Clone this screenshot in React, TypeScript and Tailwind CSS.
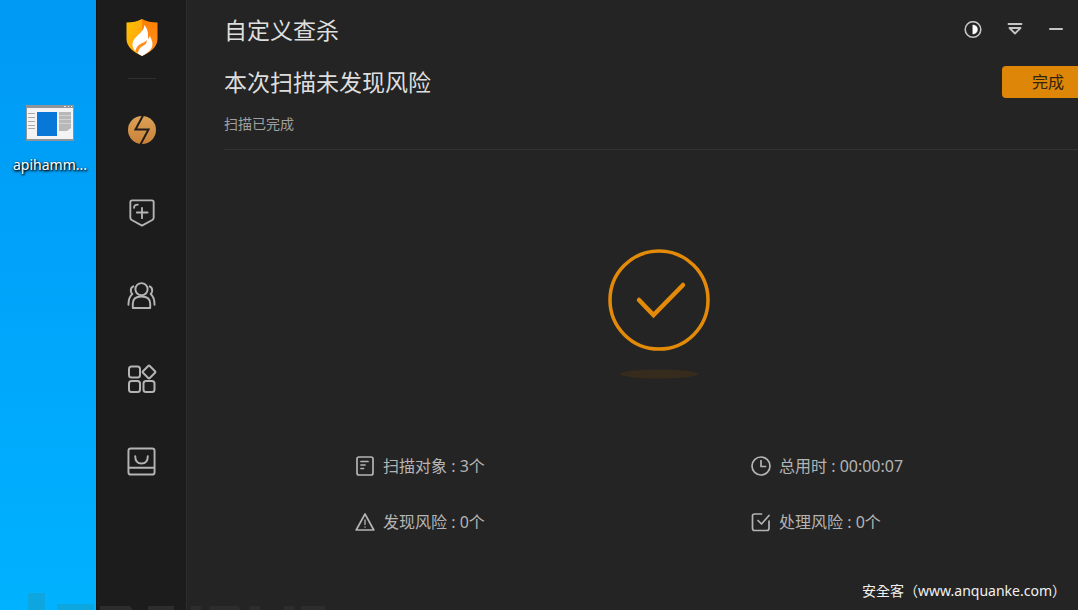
import React, { useState } from 'react';

const strokeProps = {
  fill: 'none',
  stroke: 'currentColor',
  strokeLinecap: 'round' as const,
  strokeLinejoin: 'round' as const,
  'aria-hidden': true,
};

const ShieldLogo: React.FC = () => (
  <svg width="32" height="37" viewBox="0 0 32 37" aria-hidden="true">
    <defs>
      <linearGradient id="shieldLeft" x1="0" y1="0" x2="1" y2="1">
        <stop offset="0" stopColor="#ffc400" />
        <stop offset="1" stopColor="#ff9a14" />
      </linearGradient>
      <linearGradient id="shieldRight" x1="0" y1="0" x2="0" y2="1">
        <stop offset="0" stopColor="#ff8000" />
        <stop offset="1" stopColor="#ff9226" />
      </linearGradient>
    </defs>
    <path d="M16 0 C12 2.5 6 3.4 0.5 3.4 V20 C0.5 28 8 33.5 16 37 Z" fill="url(#shieldLeft)" />
    <path d="M16 0 C20 2.5 26 3.4 31.5 3.4 V20 C31.5 28 24 33.5 16 37 Z" fill="url(#shieldRight)" />
    <path
      d="M18 6 C18.500 10 16 12.500 12 16 C7 20.500 5.500 24.500 7 28.500 C8.500 32.500 12 34.500 16 37 C21 34.500 25.500 31 26.300 26.500 C27 22 25 20 23.800 16.500 C23.500 18.300 23 19.300 22 20 C22.500 14 21.500 9 18 6 Z"
      fill="#fff"
    />
    <path
      d="M9.500 32.500 C10 27.500 13.500 25 17 23.800 C19 23 20.200 22 20.500 20.800 C21.300 23.500 20 25.300 17.500 26.500 C14 28.200 12.500 30.500 12 34 Z"
      fill="#ff8f1c"
    />
  </svg>
);

const ScanIcon = () => (
  <svg width="30" height="30" viewBox="0 0 30 30" aria-hidden="true">
    <defs>
      <linearGradient id="scanFill" x1="0" y1="0" x2="0" y2="1">
        <stop offset="0" stopColor="#dca257" />
        <stop offset="1" stopColor="#c98239" />
      </linearGradient>
    </defs>
    <circle cx="15" cy="15" r="14" fill="url(#scanFill)" />
    <path d="M16 0.5 L8.5 14.5 H21.5 L13.5 29.5" fill="none" stroke="#221d18" strokeWidth="2" />
  </svg>
);

const ProtectIcon = () => (
  <svg {...strokeProps} width="28" height="28" viewBox="0 0 30 30" strokeWidth="2">
    <path d="M4.500 1.500 H25.500 Q27.500 1.500 27.500 3.500 V20 Q27.500 21.500 26 22.500 L15 28.500 L4 22.500 Q2.500 21.500 2.500 20 V3.500 Q2.500 1.500 4.500 1.500 Z" />
    <path d="M15 9.500 V20.500 M9.500 14.500 H21 M6.500 9.500 Q6.500 6 10.500 6" />
  </svg>
);

const UsersIcon = () => (
  <svg {...strokeProps} width="29" height="29" viewBox="0 0 30 30" strokeWidth="2">
    <circle cx="15" cy="8.500" r="6.300" />
    <path d="M6 28 V23.500 Q6 16 15 16 Q24 16 24 23.500 V28 Z" />
    <path d="M6.500 5.500 Q3.500 7 4 10.500 Q4.500 12.500 5.500 13.500 Q1.500 17 1.500 24.500 M23.500 5.500 Q26.500 7 26 10.500 Q25.500 12.500 24.500 13.500 Q28.500 17 28.500 24.500" />
  </svg>
);

const AppsIcon = () => (
  <svg {...strokeProps} width="30" height="30" viewBox="0 0 30 30" strokeWidth="2">
    <rect x="2" y="2.500" width="11" height="11" rx="2.500" />
    <rect x="2" y="17" width="11" height="11" rx="2.500" />
    <rect x="16.500" y="17" width="11" height="11" rx="2.500" />
    <path d="M21.200 2 Q22 1.200 22.800 2 L28 7.200 Q28.700 8 28 8.800 L22.800 14 Q22 14.800 21.200 14 L16 8.800 Q15.300 8 16 7.200 Z" />
  </svg>
);

const StoreIcon = () => (
  <svg {...strokeProps} width="29" height="29" viewBox="0 0 30 30" strokeWidth="2">
    <rect x="1.500" y="1.500" width="27" height="27" rx="2.500" />
    <path d="M2 21.500 H28 M8.500 9.500 Q8.500 17 15 17 Q21.500 17 21.500 9.500" />
  </svg>
);

const navItems = [
  { id: 'scan', label: '病毒查杀', Icon: ScanIcon },
  { id: 'protect', label: '防护中心', Icon: ProtectIcon },
  { id: 'access', label: '访问控制', Icon: UsersIcon },
  { id: 'tools', label: '安全工具', Icon: AppsIcon },
  { id: 'store', label: '应用商店', Icon: StoreIcon },
];

const stats = [
  {
    label: '扫描对象',
    value: '3个',
    icon: (
      <>
        <rect x="2" y="1" width="16" height="18" rx="2" />
        <path d="M6 5.500 H13 M6 9 H10 M6 12.500 H8.500" />
      </>
    ),
  },
  {
    label: '总用时',
    value: '00:00:07',
    icon: (
      <>
        <circle cx="10" cy="10" r="9" />
        <path d="M10 4.500 V10.500 H14.500" />
      </>
    ),
  },
  {
    label: '发现风险',
    value: '0个',
    icon: (
      <>
        <path d="M10 2 L18.800 18 H1.200 Z" />
        <path d="M10 8 V12.500 M10 15 V15.200" strokeWidth="1.300" />
      </>
    ),
  },
  {
    label: '处理风险',
    value: '0个',
    icon: (
      <>
        <path d="M10.500 2 H3.500 Q1.500 2 1.500 4 V16 Q1.500 18.500 3.500 18.500 H16 Q18 18.500 18 16 V9" />
        <path d="M7 8.500 L10.500 12 L18 3.500" />
      </>
    ),
  },
];

const DesktopShortcut: React.FC = () => (
  <button className="flex w-full flex-col items-center pt-[105px] pl-1">
    <svg width="48" height="36" viewBox="0 0 48 36" aria-hidden="true">
      <rect width="48" height="36" fill="#8e9499" />
      <rect x="1" y="3" width="46" height="31" fill="#f3f3f3" />
      <path d="M38 1.500 H40 M42 1.500 H43 M45 1.500 H46" stroke="#e8e8e8" />
      <rect x="11" y="7" width="20" height="24" fill="#0878d8" />
      <path d="M2 8.500 H9 M2 12.500 H9 M2 16.500 H9 M2 20.500 H9 M2 23.500 H9" stroke="#a9a9a9" />
      <path d="M33 7 H45 V23 L41 26 H33 Z" fill="#b8b8b8" />
      <path d="M33 10.500 H45 M33 14.500 H45 M33 18.500 H45" stroke="#d2d2d2" />
    </svg>
    <span className="mt-[14px] text-sm/5 text-white [text-shadow:1px_1px_2px_#000,0_1px_3px_#000]">
      apihamm...
    </span>
  </button>
);

const App: React.FC = () => {
  const [active, setActive] = useState('scan');

  return (
    <div className="relative flex min-h-screen overflow-hidden bg-[#242424] font-['Noto_Sans','Noto_Sans_CJK_SC',sans-serif] text-[#b4b4b4]">
      <aside className="w-24 shrink-0 bg-linear-to-b from-[#0099f4] via-[#00a5fa] to-[#00b2ff]">
        <DesktopShortcut />
      </aside>

      <nav className="flex w-[91px] shrink-0 flex-col items-center border-r border-l border-l-[#141414] border-r-[#2c2c2c] bg-[#1c1c1c] pt-[19px]">
        <ShieldLogo />
        <div className="mt-[22px] mb-[9px] h-px w-7 bg-[#303030]" />
        {navItems.map(({ id, label, Icon }) => (
          <button
            key={id}
            aria-label={label}
            onClick={() => setActive(id)}
            aria-current={active === id}
            className="flex h-[83px] w-full items-center justify-center"
          >
            <Icon />
          </button>
        ))}
      </nav>

      {/* The window continues past the right edge of the screen */}
      <main className="-mr-4 flex min-w-0 flex-1 flex-col pl-[37px]">
        <header className="flex h-[60px] items-center justify-between pr-[30px]">
          <h1 className="text-[23px]/8 text-[#dedede]">自定义查杀</h1>
          <div className="flex items-center gap-6 text-[#c4c4c4]">
            <button aria-label="切换皮肤">
              <svg {...strokeProps} width="18" height="18" viewBox="0 0 18 18" strokeWidth="1.600">
                <circle cx="9" cy="8.500" r="7.800" />
                <path d="M9 4 A4.500 4.500 0 0 1 9 13 Z" fill="#fff" stroke="#fff" strokeWidth="0.500" />
              </svg>
            </button>
            <button aria-label="菜单">
              <svg {...strokeProps} width="18" height="18" viewBox="0 0 18 18" strokeWidth="1.800">
                <path d="M2.500 3 H15.500 M3.500 7 H14.500 L9 12.500 Z" />
              </svg>
            </button>
            <button aria-label="最小化">
              <svg {...strokeProps} width="16" height="18" viewBox="0 0 16 18" strokeWidth="2">
                <path d="M2 8 H14" />
              </svg>
            </button>
          </div>
        </header>

        <section className="border-b border-[#323232] pt-1 pb-[15px]">
          <div className="flex items-center justify-between">
            <h2 className="text-[23px]/9 text-[#dedede]">本次扫描未发现风险</h2>
            <button className="h-8 w-[92px] rounded bg-[#dd8607] text-base text-[#33240c]">完成</button>
          </div>
          <p className="mt-[14px] text-sm/5 text-[#a0a0a0]">扫描已完成</p>
        </section>

        <div className="flex flex-col items-center pt-[98px]">
          <svg width="104" height="132" viewBox="0 0 104 132" role="img" aria-label="完成">
            <circle cx="52" cy="52" r="49" fill="none" stroke="#e38b08" strokeWidth="3.500" />
            <path
              d="M32 52 L46.500 67 L76 37"
              fill="none"
              stroke="#e38b08"
              strokeWidth="4.500"
              strokeLinecap="round"
              strokeLinejoin="miter"
            />
            <ellipse cx="52" cy="126" rx="39" ry="4.500" fill="#362b1d" />
          </svg>
        </div>

        <dl className="mt-[74px] grid grid-cols-[396px_212px] justify-center gap-y-8">
          {stats.map((item) => (
            <div key={item.label} className="flex h-6 items-center text-base">
              <svg {...strokeProps} width="20" height="20" viewBox="0 0 20 20" strokeWidth="1.700" className="mr-2">
                {item.icon}
              </svg>
              <dt>{item.label}</dt>
              <dd className="whitespace-pre"> : {item.value}</dd>
            </div>
          ))}
        </dl>
      </main>

      {/* Image watermarks */}
      <svg width="330" height="18" viewBox="0 0 330 18" className="absolute bottom-0 left-0" aria-hidden="true">
        <path d="M28 1 H45 V18 H28 Z M57 12 H94 V18 H57 Z" fill="#0ea6df" />
        <path
          d="M100 14 H130 L133 18 H100 Z M148 14 H174 V18 H148 Z M191 14 H201 V18 H191 Z M210 14 H238 L241 18 H210 Z M250 14 H260 V18 H250 Z M284 14 H294 V18 H284 Z M301 14 H325 V18 H301 Z"
          fill="#2d2d2d"
        />
      </svg>
      <p className="absolute right-3 bottom-[9px] font-['Noto_Sans','Noto_Sans_CJK_TC',sans-serif] text-sm/5 text-[#f0f0f0]">
        安全客（www.anquanke.com）
      </p>
    </div>
  );
};

export default App;
